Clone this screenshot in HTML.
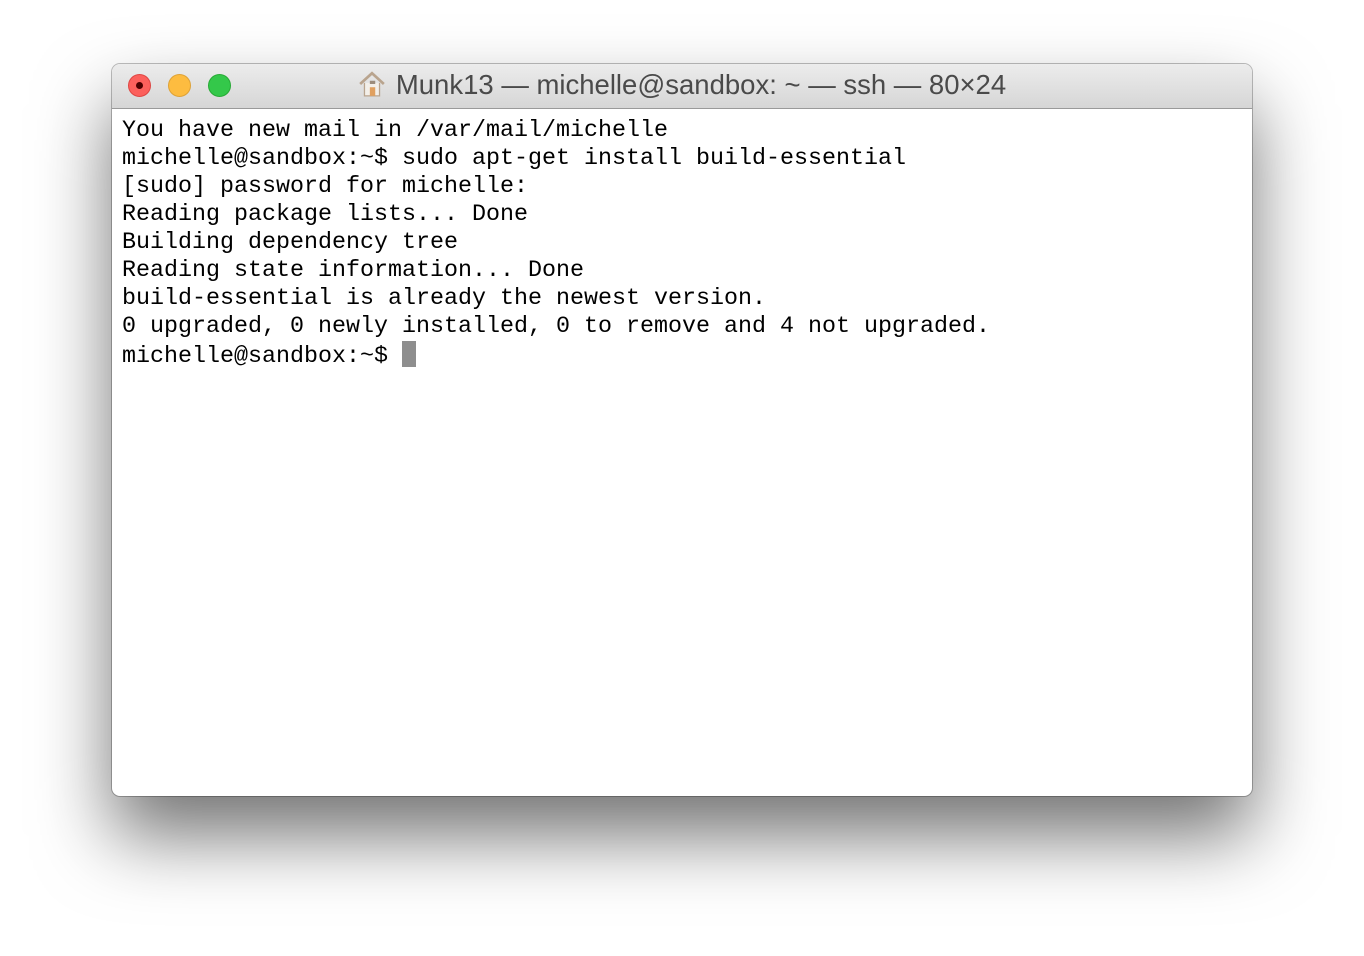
<!DOCTYPE html>
<html><head><meta charset="utf-8"><style>
html,body{margin:0;padding:0;background:#fff;width:1364px;height:956px;overflow:hidden}
.win{position:absolute;left:112px;top:64px;width:1140px;height:732px;background:#fff;border-radius:8px;
box-shadow:0 40px 75px rgba(0,0,0,0.55),0 0 0 1px rgba(0,0,0,0.25);overflow:hidden}
.tb{height:44px;background:linear-gradient(#ececec,#d6d6d6);border-bottom:1px solid #9a9a9a;position:relative}
.l{position:absolute;top:10px;width:23px;height:23px;border-radius:50%;box-sizing:border-box}
.title{position:absolute;left:0;right:0;top:5px;text-align:center;font:27.5px "Liberation Sans",sans-serif;color:#4a4a4a}
.term{position:absolute;left:10px;top:53px;font:23.33px/28px "Liberation Mono",monospace;color:#000;white-space:pre}
.cur{display:inline-block;width:14px;height:26px;background:#8e8e8e;vertical-align:-5px}
</style></head><body>
<div class="win">
<div class="tb">
<div class="l" style="left:16px;background:#fc605c;border:1px solid #de4643"><div style="position:absolute;left:7px;top:7px;width:7px;height:7px;border-radius:50%;background:#4c0000"></div></div>
<div class="l" style="left:56px;background:#fdbc40;border:1px solid #dea236"></div>
<div class="l" style="left:96px;background:#34c84a;border:1px solid #27aa35"></div>
<div class="title"><svg width="28" height="28" viewBox="0 0 26 26" style="vertical-align:-4px;margin-right:10px"><path d="M2 13 L13 3 L24 13" fill="none" stroke="#b9a48e" stroke-width="2.5"/><path d="M6 12 V24 H20 V12" fill="#f3efe9" stroke="#b9a48e" stroke-width="1.2"/><rect x="11" y="16" width="5" height="8" fill="#e0a060"/><rect x="11" y="10" width="5" height="3" fill="#9c8c7c"/></svg>Munk13 — michelle@sandbox: ~ — ssh — 80×24</div>
</div>
<div class="term">You have new mail in /var/mail/michelle
michelle@sandbox:~$ sudo apt-get install build-essential
[sudo] password for michelle:
Reading package lists... Done
Building dependency tree
Reading state information... Done
build-essential is already the newest version.
0 upgraded, 0 newly installed, 0 to remove and 4 not upgraded.
michelle@sandbox:~$ <span class="cur"></span></div>
</div>
</body></html>
